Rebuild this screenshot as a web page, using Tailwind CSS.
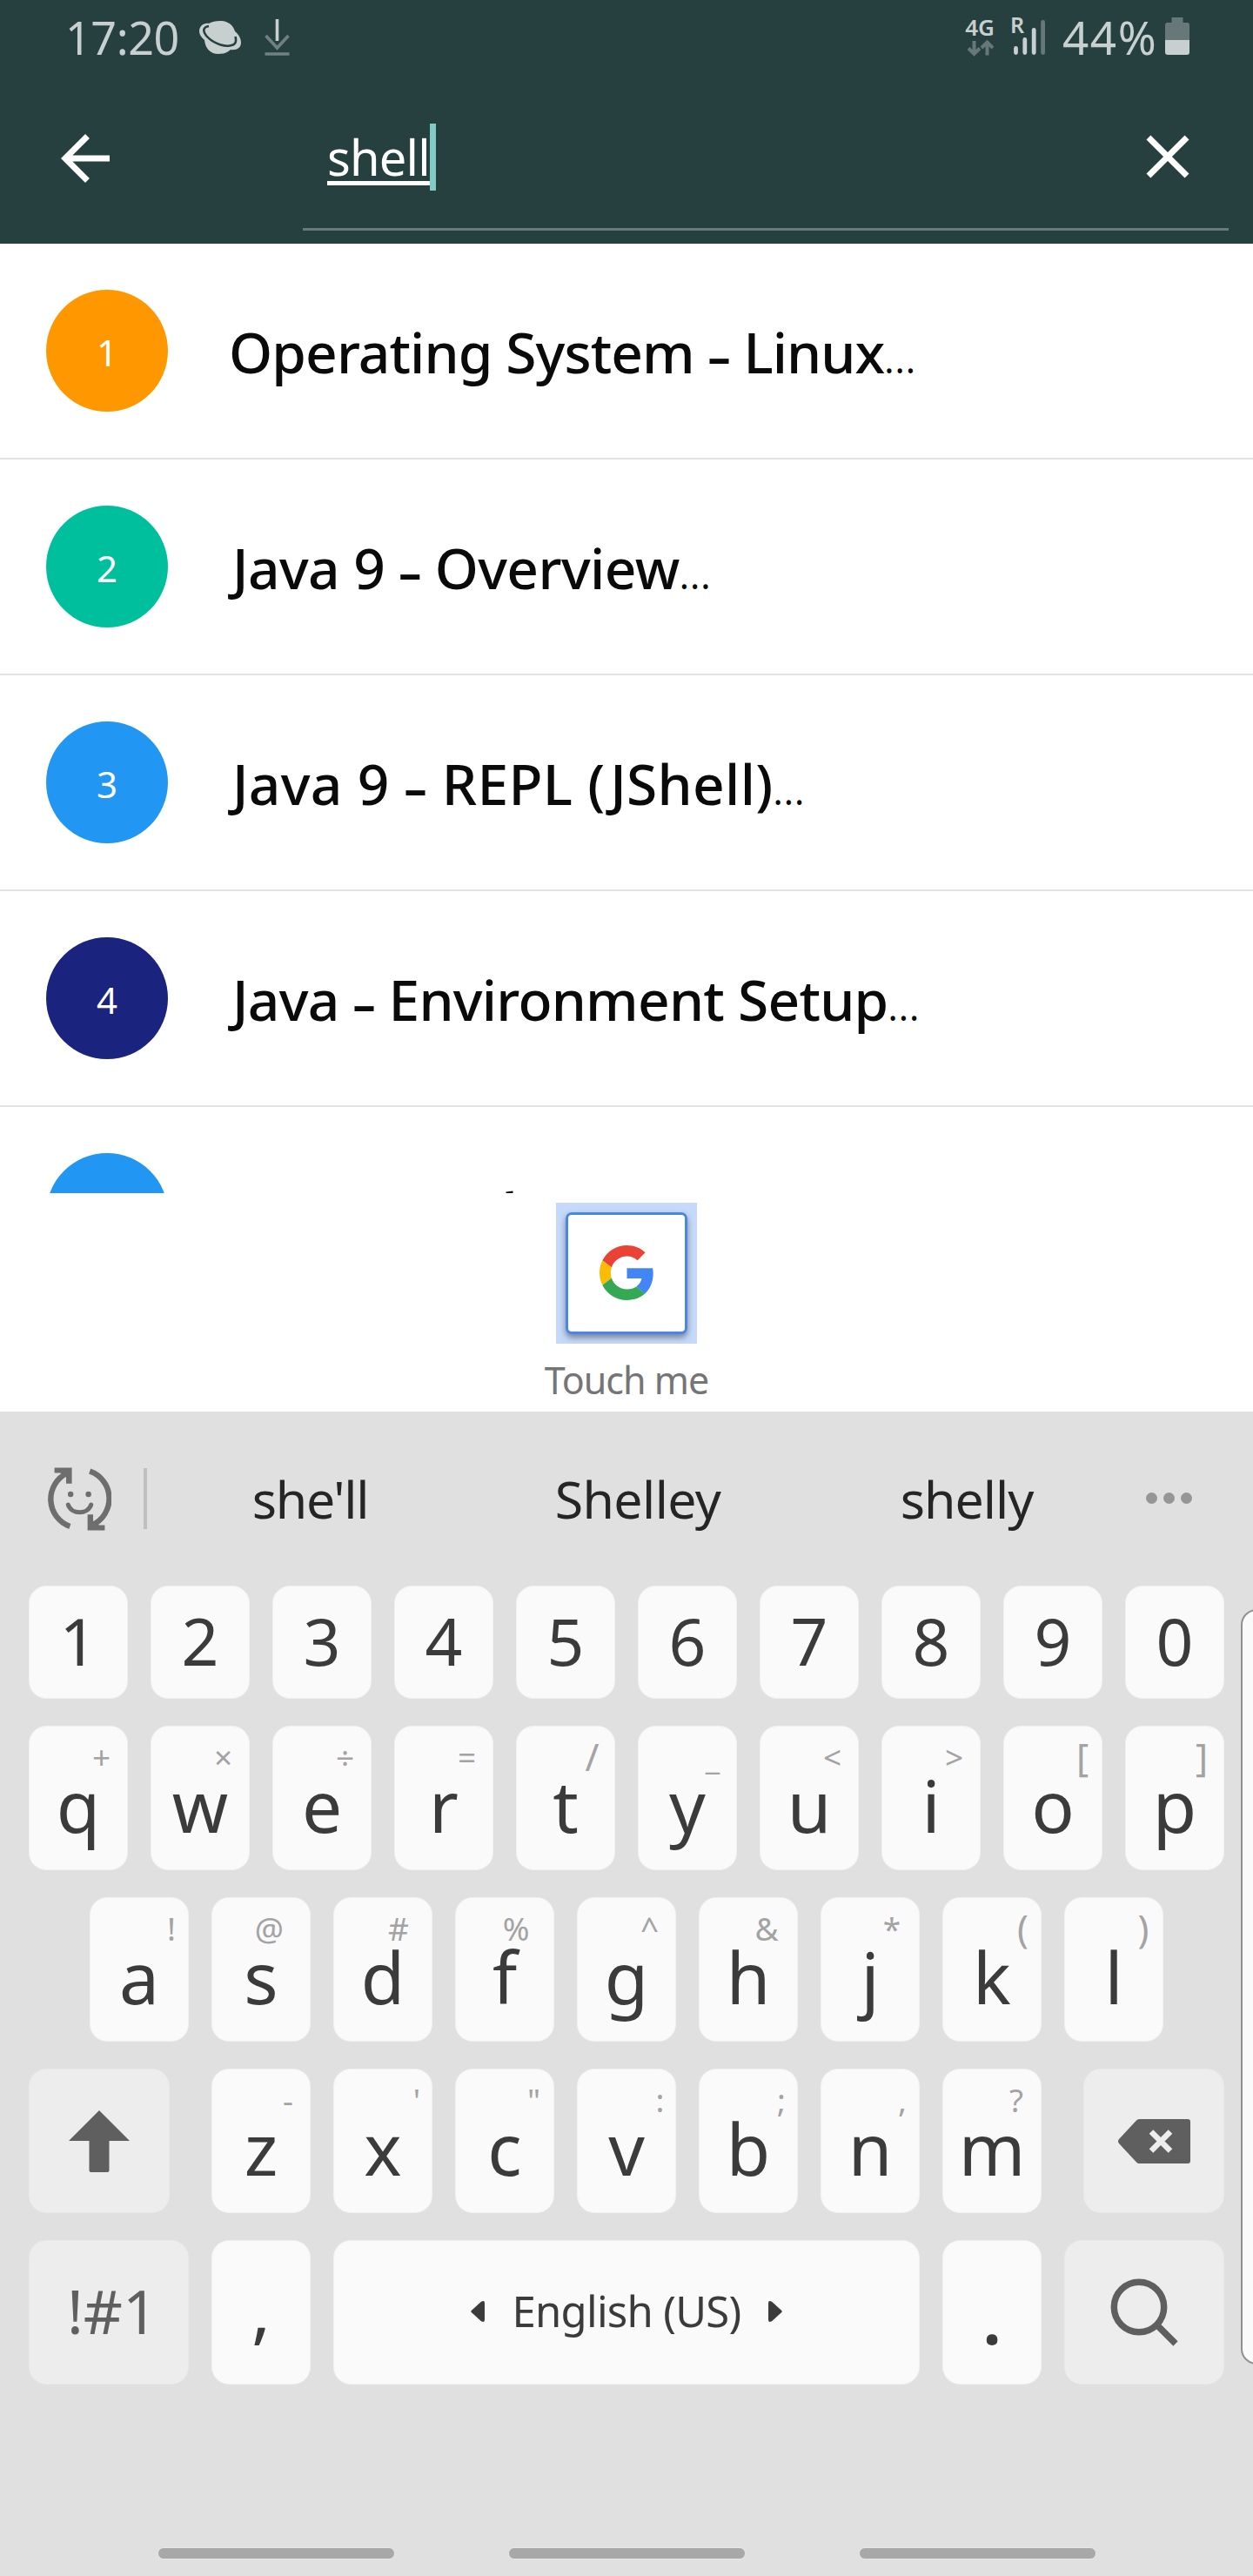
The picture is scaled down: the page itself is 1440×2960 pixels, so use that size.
<!DOCTYPE html>
<html lang="en">
<head>
<meta charset="utf-8">
<title>Search tutorials</title>
<script src="https://cdn.jsdelivr.net/npm/@tailwindcss/browser@4"></script>
</head>
<body class="bg-white">
<div class="relative flex h-[2960px] w-[1440px] flex-col overflow-hidden bg-white font-['Noto_Sans',sans-serif]">

  <!-- Header -->
  <header class="flex h-[280px] shrink-0 flex-col bg-[#264040]">
    <div class="flex h-[85px] items-center justify-between pl-[75px] pr-[73px] text-[#c7cfcf]">
      <div class="flex items-center">
        <span class="w-[154px] whitespace-nowrap text-[52px] leading-none tracking-[-0.4px]">17:20</span>
        <svg class="h-[38px] w-12" viewBox="0 0 48 38">
          <path fill="#c7cfcf" d="M11 3C14 1 19 0 24 0C33 0 39 5 41 12C46 16 48 21 48 25C48 31 43 34 36 33C32 37 27 38 22 38C13 38 7 32 6 22C2 19 0 15 0 12C0 6 5 2 11 3Z"/>
          <path fill="none" stroke="#264040" stroke-width="2.6" d="M11 6C4 7 4 12 8 17C14 24 26 30 35 28.500C42 27.500 43 24 41.500 18"/>
        </svg>
        <svg class="ml-[27px] h-[42px] w-[29px]" viewBox="0 0 29 42" fill="none">
          <path stroke="#6f8180" stroke-width="3.600" d="M1.500 19L14.500 33L27.500 19M.5 40H28.500"/>
          <path stroke="#c7cfcf" stroke-width="3.600" d="M14.500 0V25"/>
        </svg>
      </div>
      <div class="flex h-full items-start">
        <div class="flex w-8 flex-col items-center pt-[18px]">
          <span class="text-[26px] font-semibold leading-none">4G</span>
          <svg class="mt-px h-[21px] w-8" viewBox="0 0 32 21" fill="none" stroke="#667877" stroke-width="4">
            <path d="M9.500 2V16M3 10.500L9.500 17L16 10.500"/><path d="M24.500 18.500V5M18 10L24.500 3.500L31 10"/>
          </svg>
        </div>
        <div class="relative ml-5 h-16 w-[39px]">
          <span class="absolute left-[-1px] top-[16px] text-[25px] font-semibold leading-none">R</span>
          <svg class="h-16 w-[39px]" viewBox="0 0 39 64" stroke-width="4.800" stroke-linecap="round">
            <path stroke="#c7cfcf" d="M5.500 55.500V60.500M15.800 45.500V60.500M26.200 34.500V60.500"/>
            <path stroke="#667877" d="M36.600 25.500V60.500"/>
          </svg>
        </div>
        <span class="ml-5 w-[118px] whitespace-nowrap pt-[16px] text-[53px] leading-none tracking-[1.500px]">44%</span>
        <svg class="mt-5 h-[43px] w-7" viewBox="0 0 28 43">
          <path fill="#667877" d="M7.500 0H20.500V6H25.500Q28 6 28 9V26H0V9Q0 6 2.500 6H7.500Z"/>
          <path fill="#c7cfcf" d="M0 26H28V40Q28 43 25 43H3Q0 43 0 40Z"/>
        </svg>
      </div>
    </div>
    <div class="flex h-[195px] pl-14 pr-7">
      <svg class="mt-[55px] h-[84px] w-[84px]" viewBox="0 0 24 24" fill="#fff"><path d="M20 11H7.830l5.590-5.590L12 4l-8 8 8 8 1.410-1.410L7.830 13H20v-2z"/></svg>
      <div class="ml-[208px] mt-[13px] flex h-[167px] w-[1064px] items-center border-b-[3px] border-[#667b7a] pl-7 pr-7">
        <span class="text-[56px] leading-[77px] tracking-[-0.800px] text-white underline decoration-[5px] underline-offset-[6px]">shell</span>
        <span class="h-[77px] w-[7px] bg-[#80cbc4]"></span>
        <svg class="ml-auto h-[84px] w-[84px]" viewBox="0 0 24 24" fill="#fff"><path d="M19 6.410L17.590 5 12 10.590 6.410 5 5 6.410 10.590 12 5 17.590 6.410 19 12 13.410 17.590 19 19 17.590 13.410 12z"/></svg>
      </div>
    </div>
  </header>

  <!-- Results, the fifth row is clipped by the footer panel -->
  <ul class="h-[1091px] shrink-0 overflow-hidden text-[#0a0a0a]">
    <li class="flex h-[248px] items-center border-b-2 border-[#e2e3e4] pl-[53px]">
      <span class="flex h-[140px] w-[140px] items-center justify-center rounded-full bg-[#ff9800] pt-1 text-[42px] leading-none text-white">1</span>
      <p class="ml-[70px] whitespace-nowrap pt-[3px] text-[64px] font-medium leading-none tracking-[-0.900px]">Operating System <span class="text-[52px] font-bold">–</span> Linux<span class="text-[42px] font-normal tracking-[1px]">...</span></p>
    </li>
    <li class="flex h-[248px] items-center border-b-2 border-[#e2e3e4] pl-[53px]">
      <span class="flex h-[140px] w-[140px] items-center justify-center rounded-full bg-[#00bf9c] pt-1 text-[42px] leading-none text-white">2</span>
      <p class="ml-[74px] whitespace-nowrap pt-[3px] text-[64px] font-medium leading-none tracking-[-0.600px]">Java 9 <span class="text-[52px] font-bold">–</span> Overview<span class="text-[42px] font-normal tracking-[1px]">...</span></p>
    </li>
    <li class="flex h-[248px] items-center border-b-2 border-[#e2e3e4] pl-[53px]">
      <span class="flex h-[140px] w-[140px] items-center justify-center rounded-full bg-[#2196f3] pt-1 text-[42px] leading-none text-white">3</span>
      <p class="ml-[74px] whitespace-nowrap pt-[3px] text-[64px] font-medium leading-none tracking-[0.300px]">Java 9 <span class="text-[52px] font-bold">–</span> REPL (JShell)<span class="text-[42px] font-normal tracking-[1px]">...</span></p>
    </li>
    <li class="flex h-[248px] items-center border-b-2 border-[#e2e3e4] pl-[53px]">
      <span class="flex h-[140px] w-[140px] items-center justify-center rounded-full bg-[#1a237e] pt-1 text-[42px] leading-none text-white">4</span>
      <p class="ml-[74px] whitespace-nowrap pt-[3px] text-[64px] font-medium leading-none tracking-[-0.750px]">Java <span class="text-[52px] font-bold">–</span> Environment Setup<span class="text-[42px] font-normal tracking-[1px]">...</span></p>
    </li>
    <li class="flex h-[248px] items-start pl-[53px] pt-[53px]">
      <span class="h-[140px] w-[140px] rounded-full bg-[#2196f3]"></span>
      <svg class="ml-[388px] mt-[43px] h-[3px] w-[9px]" viewBox="0 0 9 3"><path d="M.5 1.400L8.500 .600V3H.5Z" fill="#0a0a0a"/></svg>
    </li>
  </ul>

  <!-- Touch me -->
  <section class="flex h-[251px] shrink-0 flex-col items-center bg-white pt-[11px]">
    <div class="flex h-[162px] w-[162px] items-center justify-center bg-[#c6d9fa]">
      <div class="flex h-[140px] w-[140px] items-center justify-center rounded-[7px] border-[3.500px] border-[#4a86e8] bg-white pb-px shadow-[0_4px_7px_rgba(0,0,0,0.4)]">
        <svg class="h-[63px] w-[63px]" viewBox="0 0 48 48">
          <path fill="#EA4335" d="M24 9.5c3.54 0 6.71 1.22 9.21 3.6l6.85-6.85C35.9 2.38 30.47 0 24 0 14.62 0 6.51 5.38 2.56 13.22l7.98 6.19C12.43 13.72 17.74 9.5 24 9.5z"/>
          <path fill="#4285F4" d="M46.98 24.55c0-1.570-.15-3.090-.38-4.550H24v9.020h12.940c-.58 2.960-2.260 5.480-4.780 7.180l7.730 6c4.510-4.180 7.090-10.360 7.090-17.650z"/>
          <path fill="#FBBC05" d="M10.53 28.59c-.48-1.450-.76-2.990-.76-4.590s.27-3.140.76-4.590l-7.980-6.190C.92 16.460 0 20.120 0 24c0 3.880.92 7.540 2.560 10.780l7.970-6.190z"/>
          <path fill="#34A853" d="M24 48c6.480 0 11.930-2.130 15.890-5.810l-7.730-6c-2.150 1.450-4.920 2.300-8.160 2.300-6.260 0-11.570-4.220-13.470-9.910l-7.980 6.190C6.510 42.620 14.620 48 24 48z"/>
        </svg>
      </div>
    </div>
    <p class="mt-5 text-[43px] leading-[44px] tracking-[-1px] text-[#757575]">Touch me</p>
  </section>

  <!-- Keyboard -->
  <section class="flex h-[1338px] shrink-0 flex-col bg-[#e0e0e0]">
    <div class="flex h-[200px] items-center text-[59px] leading-none text-[#252525]">
      <svg class="ml-[55px] h-[73px] w-[73px]" viewBox="0 0 72 72" fill="none" stroke="#6e6e6e">
        <path stroke-width="6.300" d="M25 67A32.800 32.800 0 0 1 22 6.500"/>
        <path stroke-width="6.300" d="M47.500 4.500A32.800 32.800 0 0 1 50 65.500"/>
        <path fill="#6e6e6e" stroke="none" d="M7.500 .5H27.200V18.500H20.700V11L14 6.500H7.500ZM64.500 71.500H45V53.500H51.300V61L58 65.500H64.500Z"/>
        <path stroke-width="5" stroke-linecap="round" d="M23 42.500C27 54 45 54 49 42.500"/>
        <circle cx="25.800" cy="30.500" r="3.200" fill="#6e6e6e" stroke="none"/><circle cx="46" cy="30.500" r="3.200" fill="#6e6e6e" stroke="none"/>
      </svg>
      <span class="ml-[37px] h-[70px] w-1 bg-[#bfbfbf]"></span>
      <span class="w-[375px] text-center tracking-[-1.300px]">she'll</span>
      <span class="w-[378px] text-center tracking-[-0.600px]">Shelley</span>
      <span class="w-[378px] text-center tracking-[-1px]">shelly</span>
      <span class="ml-[17px] flex gap-[7px] pb-[2px]">
        <i class="h-[13px] w-[13px] rounded-full bg-[#969696]"></i><i class="h-[13px] w-[13px] rounded-full bg-[#969696]"></i><i class="h-[13px] w-[13px] rounded-full bg-[#969696]"></i>
      </span>
    </div>

    <div id="row-0" class="flex h-[130px] gap-[26px] pl-[33px]"></div>
    <div id="row-1" class="mt-[31px] flex h-[166px] gap-[26px] pl-[33px]"></div>
    <div id="row-2" class="mt-[31px] flex h-[166px] gap-[26px] pl-[103px]"></div>
    <div class="mt-[31px] flex h-[166px] pl-[33px]">
      <div class="flex w-[162px] items-center justify-center rounded-[20px] border border-[#e9e9e9] bg-[#ededed]">
        <svg class="h-[71px] w-[70px]" viewBox="0 0 70 71" fill="#5f5f5f"><path d="M35 0L70 35H46.500V69Q46.500 71 44.500 71H25.500Q23.500 71 23.500 69V35H0Z"/></svg>
      </div>
      <div id="row-3" class="ml-12 flex gap-[26px]"></div>
      <div class="ml-12 flex w-[162px] items-center justify-center rounded-[20px] border border-[#e9e9e9] bg-[#ededed]">
        <svg class="h-[51px] w-[83px]" viewBox="0 0 83 51"><path fill="#5f5f5f" d="M24 0H80Q83 0 83 3V48Q83 51 80 51H24Q22.500 51 21 49.500L1 28Q-1 25.500 1 23L21 1.500Q22.500 0 24 0Z"/><path stroke="#ededed" stroke-width="6.500" d="M38 14.500L60 36.500M60 14.500L38 36.500"/></svg>
      </div>
    </div>
    <div class="mt-[31px] flex h-[166px] gap-[26px] pl-[33px] text-[#3b3b3b]">
      <div class="flex w-[184px] items-center justify-center rounded-[20px] border border-[#e9e9e9] bg-[#ededed] pb-1 pl-2 text-[70px] leading-none text-[#5f5f5f]">!#1</div>
      <div class="flex w-[114px] items-center justify-center rounded-[20px] border border-[#f1f1f1] bg-[#fafafa] pb-[10px] text-[82px] leading-none">,</div>
      <div class="flex w-[674px] items-center justify-center gap-[31px] rounded-[20px] border border-[#f1f1f1] bg-[#fafafa] pb-[3px]">
        <svg class="h-6 w-4" viewBox="0 0 16 28" preserveAspectRatio="none" fill="#3b3b3b"><path d="M1 12.500L12 1Q16 -1.500 16 3V25Q16 29.500 12 27L1 15.500Q-.5 14 1 12.500Z"/></svg>
        <span class="text-[49px] leading-none tracking-[-0.700px]">English (US)</span>
        <svg class="h-6 w-4 rotate-180" viewBox="0 0 16 28" preserveAspectRatio="none" fill="#3b3b3b"><path d="M1 12.500L12 1Q16 -1.500 16 3V25Q16 29.500 12 27L1 15.500Q-.5 14 1 12.500Z"/></svg>
      </div>
      <div class="flex w-[114px] items-center justify-center rounded-[20px] border border-[#f1f1f1] bg-[#fafafa] pt-[9px] text-[82px] font-semibold leading-none">.</div>
      <div class="flex w-[184px] items-center justify-center rounded-[20px] border border-[#e9e9e9] bg-[#ededed]">
        <svg class="h-20 w-20" viewBox="0 0 80 80" fill="none" stroke="#5f5f5f" stroke-width="7.500"><circle cx="34" cy="34" r="28.700"/><path d="M54 54L76 76"/></svg>
      </div>
    </div>

    <!-- Gesture hints -->
    <div class="mt-[187px] flex gap-[130px] pl-[181px]">
      <span class="h-[14px] w-[273px] rounded-full border border-[#e8e8e8] bg-[#a8a8a8]"></span>
      <span class="h-[14px] w-[273px] rounded-full border border-[#e8e8e8] bg-[#a8a8a8]"></span>
      <span class="h-[14px] w-[273px] rounded-full border border-[#e8e8e8] bg-[#a8a8a8]"></span>
    </div>
  </section>

  <!-- Edge panel handle -->
  <div class="absolute left-[1426px] top-[1849px] h-[868px] w-10 rounded-[18px] border-2 border-[#909090] bg-[#fafafa]"></div>
</div>

<script>
  // Each key: label, secondary symbol, horizontal centre of the symbol inside the key
  const rows = [
    '1234567890'.split('').map(d => [d]),
    [['q','+',83.500],['w','×',83.500],['e','÷',83.500],['r','=',83.500],['t','/',87.500],['y','_',86],['u','&lt;',83.500],['i','&gt;',83.500],['o','[',91],['p',']',88]],
    [['a','!',94],['s','@',66.500],['d','#',75],['f','%',70],['g','^',83.500],['h','&amp;',78],['j','*',82],['k','(',92.500],['l',')',91]],
    [['z','-',88],['x',"'",96],['c','"',90.500],['v',':',95.500],['b',';',95],['n',',',94],['m','?',85]]
  ];
  // Tall symbols are set a little larger than the rest
  const hintSize = h => '/[]()'.includes(h) ? 'text-[43px]' : 'text-[37px]';
  rows.forEach((keys, i) => {
    document.getElementById('row-' + i).innerHTML = keys.map(([label, hint, x]) => i === 0
      ? `<div class="flex w-[114px] items-center justify-center rounded-[20px] border border-[#f1f1f1] bg-[#fafafa] pb-[4px] text-[75px] leading-none text-[#3b3b3b]">${label}</div>`
      : `<div class="relative flex w-[114px] items-center justify-center rounded-[20px] border border-[#f1f1f1] bg-[#fafafa] pt-4 text-[82px] leading-none text-[#3b3b3b]">${label}<span class="absolute top-[16px] -translate-x-1/2 ${hintSize(hint)} leading-[37px] text-[#a3a3a3]" style="left:${x - 1}px">${hint}</span></div>`
    ).join('');
  });
</script>
</body>
</html>
